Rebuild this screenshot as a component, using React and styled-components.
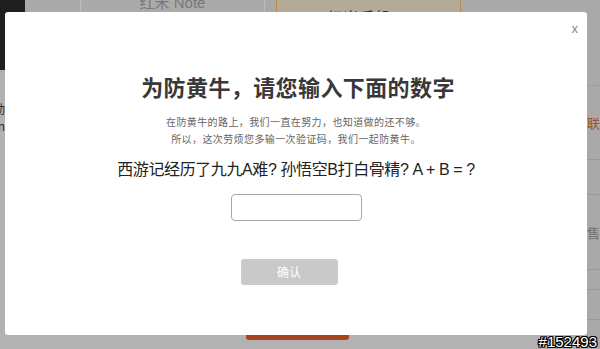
import React from "react";
import styled, { createGlobalStyle } from "styled-components";

const GlobalStyle = createGlobalStyle`
  html, body { margin: 0; padding: 0; }
  body {
    width: 600px;
    height: 349px;
    overflow: hidden;
    font-family: "Liberation Sans", "Noto Sans CJK SC", sans-serif;
  }
`;

const Page = styled.div`
  position: relative;
  width: 600px;
  height: 349px;
  overflow: hidden;
  display: flex;
  background: #b2b2b2;
`;

const LeftSide = styled.div`
  width: 25px;
  flex: none;
  display: flex;
  flex-direction: column;
`;

const DarkBlock = styled.div`
  height: 70px;
  background: #1f1f1f;
`;

const SideLabel = styled.div`
  width: 5px;
  overflow: hidden;
  display: flex;
  justify-content: flex-end;
  white-space: nowrap;
  font-family: "Noto Sans CJK SC", sans-serif;
  font-size: 12px;
  line-height: 17px;
  color: #2c2c2c;
  margin-top: ${(p) => p.$mt || 0}px;
`;

const Main = styled.div`
  flex: 1;
  display: flex;
  flex-direction: column;
  min-width: 0;
`;

const Nav = styled.div`
  height: 86px;
  flex: none;
  display: flex;
  align-items: flex-start;
  background: #a9a9a9;
  border-bottom: 1px solid #9c9c9c;
  box-sizing: border-box;
`;

const NavSpacer = styled.div`
  width: 55px;
  flex: none;
`;

const Tab = styled.div`
  width: 185px;
  flex: none;
  height: 60px;
  box-sizing: border-box;
  display: flex;
  justify-content: center;
  font-family: "Liberation Sans", "Noto Sans CJK SC", sans-serif;
  font-size: ${(p) => (p.$active ? 16 : 15)}px;
  line-height: 20px;
  color: ${(p) => (p.$active ? "#333" : "#787878")};
  background: ${(p) => (p.$active ? "#b3ab98" : "#aaaaaa")};
  border: 1px solid ${(p) => (p.$active ? "#b58f3d" : "transparent")};
  border-left-color: ${(p) => (p.$active ? "#b58f3d" : "#bcbcbc")};
  border-right-color: ${(p) => (p.$active ? "#b58f3d" : "#bcbcbc")};
  border-top: none;
  margin-left: ${(p) => p.$ml || 0}px;
  margin-top: ${(p) => p.$mt || 0}px;
  padding-top: ${(p) => p.$pt}px;
`;

const Body = styled.div`
  flex: 1;
  display: flex;
`;

const Center = styled.div`
  flex: 1;
  display: flex;
  flex-direction: column;
  justify-content: flex-end;
  align-items: center;
  padding-bottom: 9px;
  padding-right: 17px;
`;

const OrangeButton = styled.div`
  width: 103px;
  height: 40px;
  border-radius: 3px;
  background: #a8431f;
`;

const RightList = styled.div`
  width: 100px;
  flex: none;
  margin-right: -86px;
  display: flex;
  flex-direction: column;
  background: #a9a9a9;
`;

const RightItem = styled.div`
  height: ${(p) => p.$h}px;
  box-sizing: border-box;
  border-bottom: 1px solid #9a9a9a;
  display: flex;
  align-items: center;
  padding-left: 1px;
  font-family: "Noto Sans CJK SC", sans-serif;
  font-size: 13px;
  color: ${(p) => p.$color || "#6e6e6e"};
  white-space: nowrap;
`;

const Modal = styled.div`
  position: absolute;
  left: 5px;
  top: 12px;
  width: 582px;
  height: 323px;
  box-sizing: border-box;
  background: #fff;
  border-radius: 3px;
  display: flex;
  flex-direction: column;
  align-items: center;
  padding-top: 59px;
`;

const Close = styled.span`
  position: absolute;
  top: 10px;
  right: 9px;
  font-family: "Liberation Sans", sans-serif;
  font-size: 13px;
  line-height: 13px;
  color: #8a8a8a;
  cursor: pointer;
`;

const Title = styled.h1`
  margin: 0;
  font-family: "Noto Sans CJK SC", sans-serif;
  font-weight: 700;
  font-size: 22px;
  line-height: 30px;
  color: #383838;
  letter-spacing: 0.4px;
  padding-left: 4px;
`;

const Note = styled.p`
  margin: 12px 0 0;
  font-family: "Noto Sans CJK SC", sans-serif;
  font-size: 10px;
  line-height: 17px;
  color: #666;
  text-align: center;
  letter-spacing: 0.4px;
`;

const Question = styled.p`
  margin: 12px 0 0;
  font-family: "Liberation Sans", "Noto Sans CJK SC", sans-serif;
  font-size: 16px;
  line-height: 22px;
  color: #222;
  white-space: nowrap;
  letter-spacing: -0.4px;
`;

const AnswerInput = styled.input`
  margin-top: 13px;
  width: 131px;
  height: 27px;
  box-sizing: border-box;
  border: 1px solid #a8a8a8;
  border-radius: 4px;
  background: #fff;
  outline: none;
  padding: 0 6px;
`;

const Confirm = styled.button`
  margin-top: 38px;
  margin-right: 14px;
  width: 97px;
  height: 26px;
  border: none;
  border-radius: 3px;
  background: #c9c9c9;
  color: #fff;
  font-family: "Noto Sans CJK SC", sans-serif;
  font-size: 12px;
  line-height: 26px;
  padding: 0;
`;

const Watermark = styled.span`
  position: absolute;
  right: 3px;
  bottom: 0px;
  font-family: "Liberation Sans", sans-serif;
  font-size: 15px;
  line-height: 14px;
  color: #fff;
  text-shadow: -1px 0 #000, 1px 0 #000, 0 -1px #000, 0 1px #000,
    -1px -1px #000, 1px 1px #000, -1px 1px #000, 1px -1px #000;
`;

export default function App() {
  return (
    <>
      <GlobalStyle />
      <Page>
        <LeftSide>
          <DarkBlock />
          <SideLabel $mt={30}>活动</SideLabel>
          <SideLabel>介绍n</SideLabel>
        </LeftSide>
        <Main>
          <Nav>
            <NavSpacer />
            <Tab $pt={0} $mt={-7}>红米 Note</Tab>
            <Tab $active $ml={11} $pt={9}>红米手机1S</Tab>
          </Nav>
          <Body>
            <Center>
              <OrangeButton />
            </Center>
            <RightList>
              <RightItem $h={74} $color="#a5521c">联系客服</RightItem>
              <RightItem $h={35} />
              <RightItem $h={75}>售后服务</RightItem>
              <RightItem $h={20} />
              <RightItem $h={30} />
            </RightList>
          </Body>
        </Main>
        <Modal>
          <Close>x</Close>
          <Title>为防黄牛，请您输入下面的数字</Title>
          <Note>
            在防黄牛的路上，我们一直在努力，也知道做的还不够。
            <br />
            所以，这次劳烦您多输一次验证码，我们一起防黄牛。
          </Note>
          <Question>西游记经历了九九A难? 孙悟空B打白骨精? A + B = ?</Question>
          <AnswerInput type="text" />
          <Confirm>确认</Confirm>
        </Modal>
        <Watermark>#152493</Watermark>
      </Page>
    </>
  );
}
